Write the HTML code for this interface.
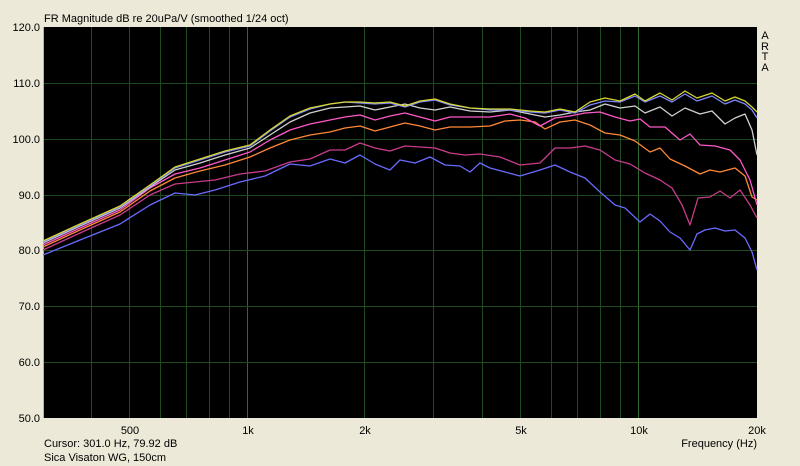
<!DOCTYPE html>
<html><head><meta charset="utf-8"><style>
html,body{margin:0;padding:0;width:800px;height:466px;background:#ece9d8;overflow:hidden;font-family:"Liberation Sans",sans-serif;}
svg{position:absolute;left:0;top:0}
</style></head><body>
<svg width="800" height="466" xmlns="http://www.w3.org/2000/svg" font-family="Liberation Sans, sans-serif" font-size="11" fill="#000">
<rect x="43" y="27" width="714" height="391" fill="#000"/>
<g stroke="#1f4a1f" stroke-width="1">
<line x1="91.5" y1="27" x2="91.5" y2="418"/><line x1="129.5" y1="27" x2="129.5" y2="418"/>
<line x1="160.5" y1="27" x2="160.5" y2="418"/><line x1="186.5" y1="27" x2="186.5" y2="418"/>
<line x1="209.5" y1="27" x2="209.5" y2="418"/><line x1="229.5" y1="27" x2="229.5" y2="418"/>
<line x1="247.5" y1="27" x2="247.5" y2="418" stroke="#2e6a2e"/>
<line x1="364.5" y1="27" x2="364.5" y2="418"/><line x1="433.5" y1="27" x2="433.5" y2="418"/>
<line x1="482.5" y1="27" x2="482.5" y2="418"/><line x1="520.5" y1="27" x2="520.5" y2="418"/>
<line x1="551.5" y1="27" x2="551.5" y2="418"/><line x1="577.5" y1="27" x2="577.5" y2="418"/>
<line x1="600.5" y1="27" x2="600.5" y2="418"/><line x1="620.5" y1="27" x2="620.5" y2="418"/>
<line x1="638.5" y1="27" x2="638.5" y2="418" stroke="#2e6a2e"/>
<line x1="43" y1="83.5" x2="757" y2="83.5"/><line x1="43" y1="139.5" x2="757" y2="139.5"/>
<line x1="43" y1="195.5" x2="757" y2="195.5"/><line x1="43" y1="250.5" x2="757" y2="250.5"/>
<line x1="43" y1="306.5" x2="757" y2="306.5"/><line x1="43" y1="362.5" x2="757" y2="362.5"/>
</g>
<line x1="43.5" y1="27" x2="43.5" y2="418" stroke="#c8c800"/>
<g fill="none" stroke-width="1.3" stroke-linejoin="round">
<polyline stroke="#6a6aff" points="43,255 80,240 120,224 150,205 175,193 195,195 215,190 240,182 265,176 290,164 310,166 330,159 345,163 360,155 375,164 390,170 400,160 415,163 430,157 445,165 460,166 470,172 480,163 490,168 505,172 520,176 540,170 555,165 570,172 585,178 600,192 615,205 625,208 640,222 650,214 660,221 670,232 680,238 690,250 697,234 705,230 715,228 725,231 735,230 745,238 752,252 757,270"/>
<polyline stroke="#c83c8c" points="43,250 80,233 120,215 150,195 175,184 195,182 215,180 240,174 265,171 290,162 310,159 330,150 345,150 360,143 375,148 390,151 405,146 420,147 435,148 450,153 465,155 480,154 500,157 520,165 540,163 555,148 570,148 585,146 600,150 615,160 630,164 645,173 660,180 672,188 682,205 690,225 698,198 710,197 720,191 730,198 740,190 750,205 757,218"/>
<polyline stroke="#ff8838" points="43,247 80,230 120,212 150,191 175,178 200,171 225,165 250,157 270,148 290,140 310,135 330,132 345,128 360,126 375,131 390,127 405,123 420,126 435,130 450,127 470,127 490,126 505,121 520,120 535,122 545,129 560,122 575,120 590,125 605,133 620,135 635,141 650,152 660,148 670,159 685,166 700,174 710,170 720,172 735,168 745,176 752,197 757,200"/>
<polyline stroke="#ff58c8" points="43,245 80,228 120,210 150,188 175,174 200,168 225,160 250,152 270,140 290,130 310,124 330,120 345,117 360,115 375,120 390,116 405,113 420,117 435,121 450,117 470,117 490,117 510,114 525,118 540,126 555,118 570,116 585,113 600,112 615,117 630,121 640,119 650,127 665,127 680,140 690,134 700,145 715,146 730,150 740,160 750,180 757,205"/>
<polyline stroke="#d0d0d0" points="43,243 80,226 120,208 150,187 175,170 200,163 225,155 250,148 270,135 290,122 310,113 330,108 345,107 360,106 375,110 390,107 405,104 420,108 435,110 450,107 470,111 490,112 510,110 530,114 545,117 560,115 575,112 590,110 605,104 620,108 635,106 645,113 660,107 672,116 685,108 700,114 712,111 725,124 735,118 745,114 752,130 757,155"/>
<polyline stroke="#7c86ff" points="43,242 80,225 120,207 150,186 175,168 200,160 225,152 250,146 270,131 290,117 310,109 330,104 345,102 360,103 375,104 390,103 405,107 420,102 435,100 450,105 470,108 490,110 510,110 530,112 545,113 560,110 575,113 590,105 605,101 620,102 635,96 645,102 660,96 672,102 685,94 697,101 712,96 725,104 735,100 745,104 752,110 757,118"/>
<polyline stroke="#d8d830" points="43,241 80,224 120,206 150,185 175,167 200,159 225,151 250,145 270,130 290,116 310,108 330,104 345,102 360,102 375,103 390,102 405,106 420,101 435,99 450,104 470,108 490,109 510,109 530,111 545,112 560,109 575,112 590,102 605,98 620,101 635,94 645,101 660,93 672,100 685,91 697,98 712,93 725,101 735,97 745,101 752,107 757,112"/>
</g>
<g font-size="11" text-anchor="end">
<text x="40" y="31">120.0</text><text x="40" y="87">110.0</text><text x="40" y="143">100.0</text>
<text x="40" y="199">90.0</text><text x="40" y="254">80.0</text><text x="40" y="310">70.0</text>
<text x="40" y="366">60.0</text><text x="40" y="422">50.0</text>
</g>
<g font-size="11" text-anchor="middle">
<text x="130" y="434">500</text><text x="248" y="434">1k</text><text x="365" y="434">2k</text>
<text x="521" y="434">5k</text><text x="639" y="434">10k</text><text x="757" y="434">20k</text>
</g>
<text x="44" y="22">FR Magnitude dB re 20uPa/V (smoothed 1/24 oct)</text>
<text x="44" y="447">Cursor: 301.0 Hz, 79.92 dB</text>
<text x="44" y="461">Sica Visaton WG, 150cm</text>
<text x="757" y="447" text-anchor="end">Frequency (Hz)</text>
<g font-size="11" text-anchor="middle"><text x="765" y="39">A</text><text x="765" y="50">R</text><text x="765" y="60">T</text><text x="765" y="71">A</text></g>
</svg>
</body></html>
